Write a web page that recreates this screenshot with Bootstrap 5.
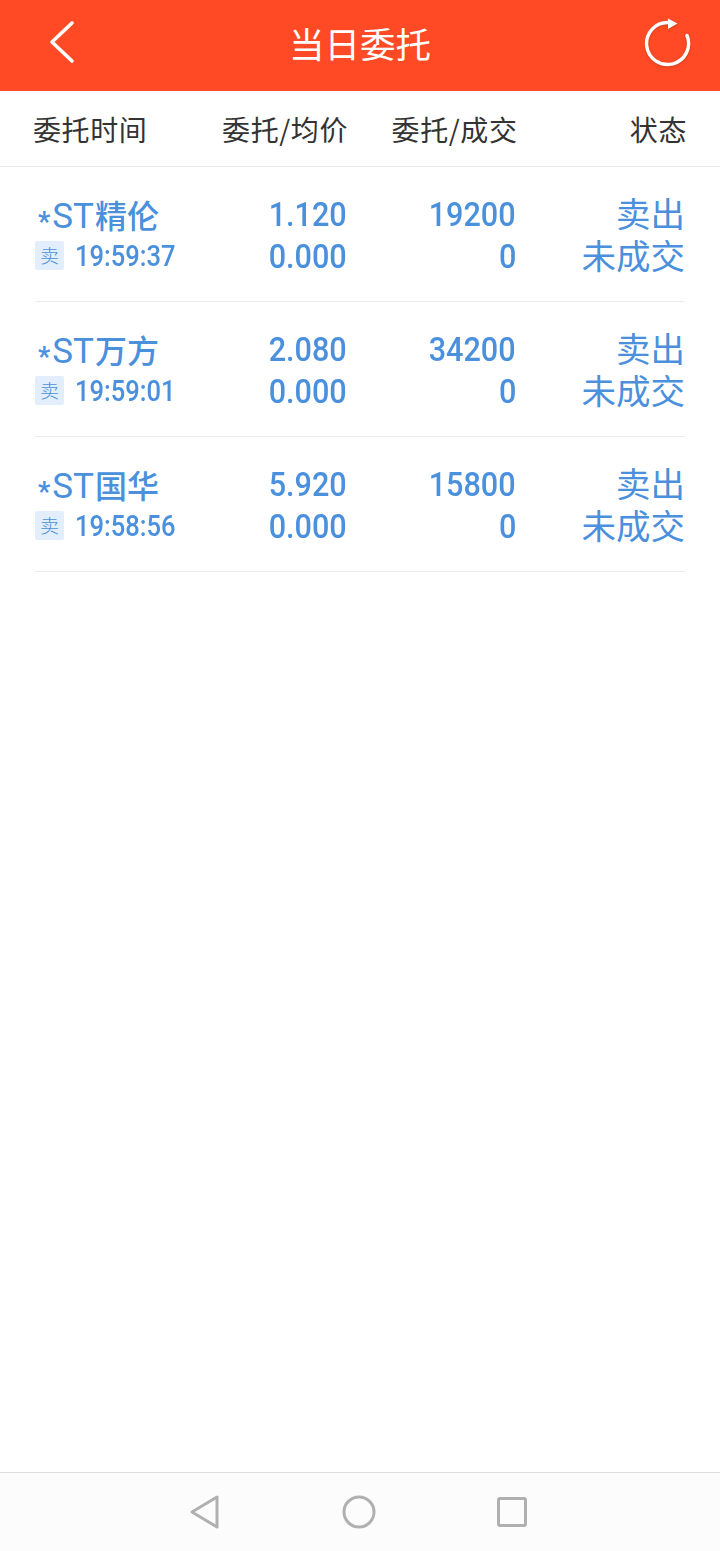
<!DOCTYPE html>
<html lang="zh-CN">
<head>
    <meta charset="UTF-8">
    <meta name="viewport" content="width=device-width, initial-scale=1.0">
    <title>当日委托</title>
    <link href="https://cdn.jsdelivr.net/npm/bootstrap@5.3.0/dist/css/bootstrap.min.css" rel="stylesheet">
    <style>
        html, body { height: 100%; }
        body {
            font-family: Roboto, "Noto Sans CJK SC", sans-serif;
            background: #fff;
            color: #4a90dc;
        }
        .page { width: 720px; height: 1551px; }
        .top-bar {
            height: 91px;
            background: #ff4a25;
            color: #fff;
            padding: 0 27px 0 44px;
        }
        .top-title { font-size: 35.5px; line-height: 1; font-family: "Noto Sans CJK SC", sans-serif; margin-bottom: 6px; margin-right: 3px; }
        .back-icon { margin-bottom: 4px; }
        .reload-icon { margin-bottom: 6px; filter: drop-shadow(0 1px 1px rgba(120, 40, 10, .35)); }
        .head-row {
            height: 76px;
            padding: 0 33px;
            border-bottom: 1px solid #ececec;
            color: #333;
            font-size: 28px;
            font-family: "Noto Sans CJK SC", sans-serif;
            letter-spacing: .6px;
        }
        .c1 { width: 170px; }
        .c2 { width: 146px; }
        .c3 { width: 170px; }
        .c4 { width: 170px; }
        .entry {
            height: 135px;
            margin: 0 35px;
            border-bottom: 1px solid #ececec;
            padding-top: 27px;
        }
        .entry .line { height: 42px; align-items: center; }
        .stock-name { font-size: 32px; line-height: 42px; white-space: nowrap; margin-left: 3px; padding-top: 6px; font-weight: 500; font-family: "Noto Sans CJK SC", sans-serif; }
        .stock-star { font-family: Roboto, sans-serif; font-size: 27px; font-weight: 700; vertical-align: -3px; margin-right: 2px; }
        .stock-code { font-family: Roboto, sans-serif; font-size: 35px; font-weight: 400; margin-right: 1px; }
        .price { font-size: 34px; line-height: 42px; font-weight: 500; margin-top: -2px; }
        .squeeze { display: inline-block; transform: scaleX(.9); transform-origin: right center; }
        .status { font-size: 34.5px; line-height: 42px; font-family: "Noto Sans CJK SC", sans-serif; margin-top: -6px; }
        .side-tag {
            width: 29px;
            height: 29px;
            line-height: 28px;
            border-radius: 2px;
            background: #e2eefb;
            font-size: 19px;
            text-align: center;
            font-family: "Noto Sans CJK SC", sans-serif;
            font-weight: 300;
            margin-right: 11px;
            margin-top: -3px;
        }
        .time { display: inline-block; font-size: 29px; line-height: 36px; font-weight: 500; transform: scaleX(.88); transform-origin: left center; margin-top: -2px; }
        .col-a { width: 195px; }
        .col-a.stock-name { width: 192px; }
        .col-b { width: 117px; }
        .col-c { width: 169px; }
        .col-d { width: 169px; }
        .nav-bar {
            height: 79px;
            background: #fcfcfc;
            border-top: 1px solid #dedede;
        }
        .nav-icons { width: 338px; margin-left: -4px; }
    </style>
</head>
<body>
    <div class="page d-flex flex-column">
        <div class="top-bar d-flex align-items-center justify-content-between flex-shrink-0">
            <svg class="back-icon" width="36" height="48" viewBox="0 0 36 48" fill="none" stroke="#fff" stroke-width="3.6" stroke-linecap="round" stroke-linejoin="round"><path d="M28 3 L8 22 L28 41"/></svg>
            <div class="top-title">当日委托</div>
            <svg class="reload-icon" width="50" height="50" viewBox="0 0 50 50" fill="none"><path d="M44 17.5 A21 21 0 1 1 25 4.5" stroke="#fff" stroke-width="3.4" stroke-linecap="round"/><path d="M25 0.5 L34.5 5.5 L25 11 Z" fill="#fff"/></svg>
        </div>

        <div class="head-row d-flex align-items-center flex-shrink-0">
            <div class="c1">委托时间</div>
            <div class="c2 text-end">委托/均价</div>
            <div class="c3 text-end">委托/成交</div>
            <div class="c4 text-end">状态</div>
        </div>

        <div class="flex-grow-1">
            <div class="entry">
                <div class="d-flex line">
                    <div class="col-a stock-name"><span class="stock-star">*</span><span class="stock-code">ST</span>精伦</div>
                    <div class="col-b text-end price"><span class="squeeze">1.120</span></div>
                    <div class="col-c text-end price"><span class="squeeze">19200</span></div>
                    <div class="col-d text-end status">卖出</div>
                </div>
                <div class="d-flex line">
                    <div class="col-a d-flex align-items-center"><span class="side-tag">卖</span><span class="time">19:59:37</span></div>
                    <div class="col-b text-end price"><span class="squeeze">0.000</span></div>
                    <div class="col-c text-end price"><span class="squeeze">0</span></div>
                    <div class="col-d text-end status">未成交</div>
                </div>
            </div>
            <div class="entry">
                <div class="d-flex line">
                    <div class="col-a stock-name"><span class="stock-star">*</span><span class="stock-code">ST</span>万方</div>
                    <div class="col-b text-end price"><span class="squeeze">2.080</span></div>
                    <div class="col-c text-end price"><span class="squeeze">34200</span></div>
                    <div class="col-d text-end status">卖出</div>
                </div>
                <div class="d-flex line">
                    <div class="col-a d-flex align-items-center"><span class="side-tag">卖</span><span class="time">19:59:01</span></div>
                    <div class="col-b text-end price"><span class="squeeze">0.000</span></div>
                    <div class="col-c text-end price"><span class="squeeze">0</span></div>
                    <div class="col-d text-end status">未成交</div>
                </div>
            </div>
            <div class="entry">
                <div class="d-flex line">
                    <div class="col-a stock-name"><span class="stock-star">*</span><span class="stock-code">ST</span>国华</div>
                    <div class="col-b text-end price"><span class="squeeze">5.920</span></div>
                    <div class="col-c text-end price"><span class="squeeze">15800</span></div>
                    <div class="col-d text-end status">卖出</div>
                </div>
                <div class="d-flex line">
                    <div class="col-a d-flex align-items-center"><span class="side-tag">卖</span><span class="time">19:58:56</span></div>
                    <div class="col-b text-end price"><span class="squeeze">0.000</span></div>
                    <div class="col-c text-end price"><span class="squeeze">0</span></div>
                    <div class="col-d text-end status">未成交</div>
                </div>
            </div>
        </div>

        <div class="nav-bar d-flex align-items-center justify-content-center flex-shrink-0">
            <div class="nav-icons d-flex align-items-center justify-content-between">
                <svg width="32" height="34" viewBox="0 0 32 34" fill="none" stroke="#b0b0b0" stroke-width="3" stroke-linejoin="round"><path d="M28 2 L28 32 L3 17 Z"/></svg>
                <svg width="34" height="34" viewBox="0 0 34 34" fill="none" stroke="#b0b0b0" stroke-width="3"><circle cx="17" cy="17" r="15"/></svg>
                <svg width="30" height="30" viewBox="0 0 30 30" fill="none" stroke="#b0b0b0" stroke-width="3" stroke-linejoin="round"><rect x="1.5" y="1.5" width="27" height="27" rx="1.5"/></svg>
            </div>
        </div>
    </div>
    <script src="https://cdn.jsdelivr.net/npm/bootstrap@5.3.0/dist/js/bootstrap.bundle.min.js"></script>
</body>
</html>
